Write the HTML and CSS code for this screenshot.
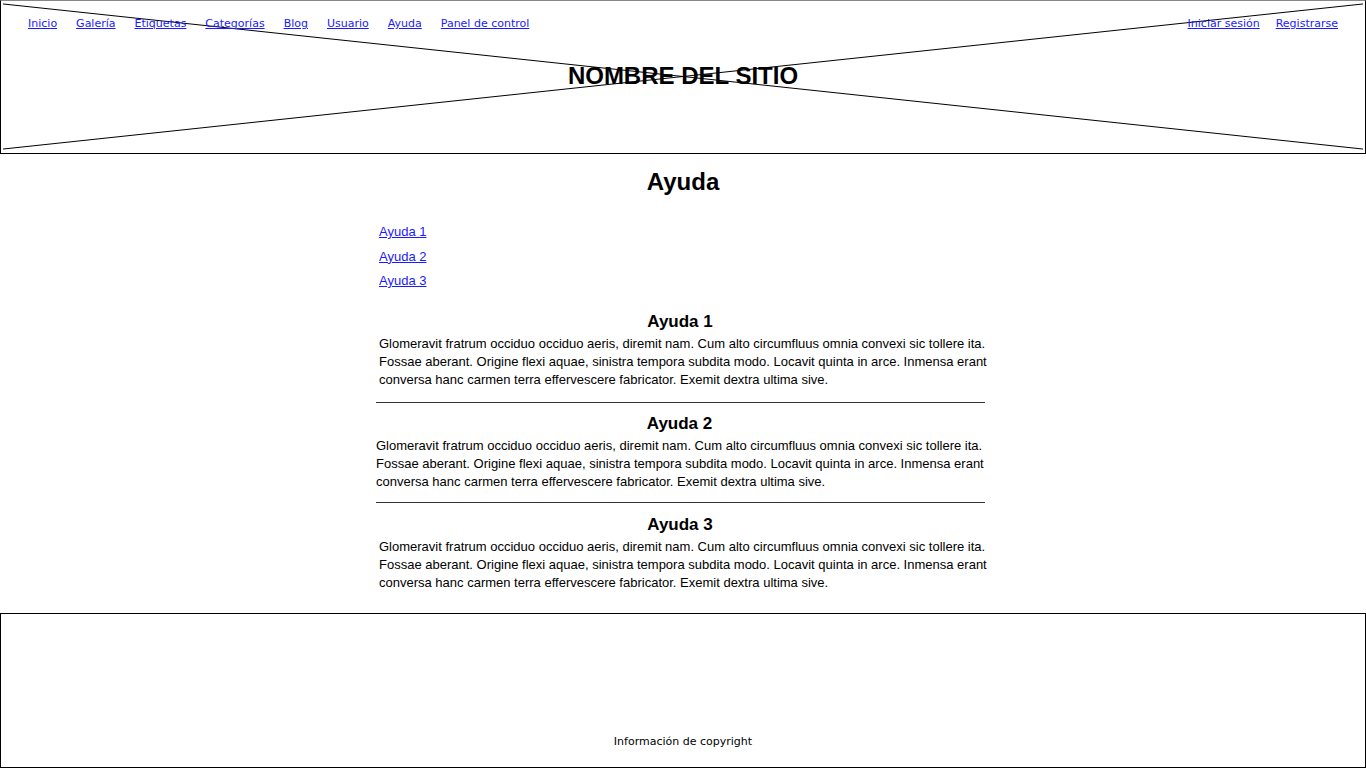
FILE: index.html
```html
<!DOCTYPE html>
<html lang="es">
    <head>
        <meta charset="UTF-8">
        <meta name="viewport" content="width=device-width, initial-scale=1.0">
        <title>Ayuda</title>
        <link rel="stylesheet" href="styles.css">
    </head>
    <body>
        <header class="site-header">
            <svg class="placeholder-x" viewBox="0 0 1366 154" preserveAspectRatio="none" aria-hidden="true">
                <line x1="2" y1="3" x2="1364" y2="150" />
                <line x1="2" y1="150" x2="1364" y2="3" />
            </svg>
            <nav class="top-nav">
                <div class="nav-links">
                    <a href="#">Inicio</a>
                    <a href="#">Galería</a>
                    <a href="#">Etiquetas</a>
                    <a href="#">Categorías</a>
                    <a href="#">Blog</a>
                    <a href="#">Usuario</a>
                    <a href="#">Ayuda</a>
                    <a href="#">Panel de control</a>
                </div>
                <div class="nav-links nav-account">
                    <a href="#">Iniciar sesión</a>
                    <a href="#">Registrarse</a>
                </div>
            </nav>
            <div class="site-name">NOMBRE DEL SITIO</div>
        </header>

        <main class="content">
            <h1>Ayuda</h1>

            <ul class="help-index">
                <li><a href="#ayuda-1">Ayuda 1</a></li>
                <li><a href="#ayuda-2">Ayuda 2</a></li>
                <li><a href="#ayuda-3">Ayuda 3</a></li>
            </ul>

            <section class="help-item" id="ayuda-1">
                <h2>Ayuda 1</h2>
                <p>Glomeravit fratrum occiduo occiduo aeris, diremit nam. Cum alto circumfluus omnia convexi sic tollere ita. Fossae aberant. Origine flexi aquae, sinistra tempora subdita modo. Locavit quinta in arce. Inmensa erant conversa hanc carmen terra effervescere fabricator. Exemit dextra ultima sive.</p>
            </section>
            <hr>
            <section class="help-item flush" id="ayuda-2">
                <h2>Ayuda 2</h2>
                <p>Glomeravit fratrum occiduo occiduo aeris, diremit nam. Cum alto circumfluus omnia convexi sic tollere ita. Fossae aberant. Origine flexi aquae, sinistra tempora subdita modo. Locavit quinta in arce. Inmensa erant conversa hanc carmen terra effervescere fabricator. Exemit dextra ultima sive.</p>
            </section>
            <hr class="tight">
            <section class="help-item" id="ayuda-3">
                <h2>Ayuda 3</h2>
                <p>Glomeravit fratrum occiduo occiduo aeris, diremit nam. Cum alto circumfluus omnia convexi sic tollere ita. Fossae aberant. Origine flexi aquae, sinistra tempora subdita modo. Locavit quinta in arce. Inmensa erant conversa hanc carmen terra effervescere fabricator. Exemit dextra ultima sive.</p>
            </section>
        </main>

        <footer class="site-footer">
            <p>Información de copyright</p>
        </footer>
    </body>
</html>
```

FILE: styles.css
```css
* {
    margin: 0;
    padding: 0;
    box-sizing: border-box;
}

body {
    background-color: #fff;
    color: #000;
    font-family: 'Liberation Sans', Arial, sans-serif;
    font-size: 13px;
}

a {
    color: #1a1aff;
}

/* Header wireframe box */
.site-header {
    position: relative;
    height: 154px;
    border: 1px solid #000;
    border-top-color: #888;
    padding-top: 15px;
}

.placeholder-x {
    position: absolute;
    top: 0;
    left: 0;
    width: 100%;
    height: 100%;
    pointer-events: none;
}

.placeholder-x line {
    stroke: #000;
    stroke-width: 1;
    vector-effect: non-scaling-stroke;
}

.top-nav {
    position: relative;
    display: flex;
    justify-content: space-between;
    padding: 0 27px;
    font-family: 'Comic Sans MS', 'DejaVu Sans', sans-serif;
    font-size: 11px;
    line-height: 16px;
}

.nav-links {
    display: flex;
    gap: 19px;
}

.nav-account {
    gap: 16px;
}

.site-name {
    position: relative;
    text-align: center;
    font-size: 24px;
    font-weight: bold;
    line-height: 28px;
    margin-top: 30px;
}

/* Main column */
.content {
    width: 614px;
    margin: 0 auto;
}

h1 {
    text-align: center;
    font-size: 24px;
    line-height: 28px;
    margin-top: 14px;
}

.help-index {
    list-style: none;
    margin: 28px 0 23px;
    padding-left: 3px;
}

.help-index li {
    line-height: 16px;
}

.help-index li + li {
    margin-top: 8.5px;
}

.help-item {
    padding-left: 3px;
}

.help-item.flush {
    padding-left: 0;
}

.help-item h2 {
    text-align: center;
    font-size: 17px;
    line-height: 20px;
    margin-bottom: 3px;
    padding-right: 9px;
}

.help-item.flush h2 {
    padding-right: 7px;
}

.help-item p {
    line-height: 18px;
}

hr {
    border: none;
    border-top: 1px solid #333;
    margin: 13px 5px 11px 0;
}

hr.tight {
    margin-top: 11px;
    margin-bottom: 12px;
}

/* Footer wireframe box */
.site-footer {
    height: 155px;
    margin-top: 21px;
    border: 1px solid #000;
    display: flex;
    align-items: flex-end;
    justify-content: center;
    padding-bottom: 17px;
    font-family: 'Comic Sans MS', 'DejaVu Sans', sans-serif;
    font-size: 11px;
    line-height: 16px;
}
```
